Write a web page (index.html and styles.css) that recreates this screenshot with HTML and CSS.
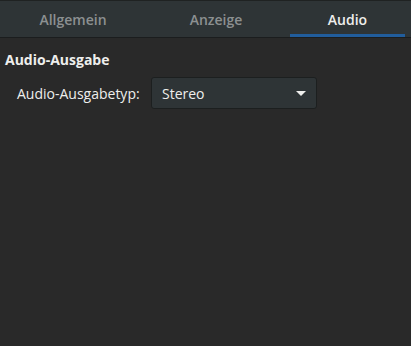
FILE: index.html
```html
<!DOCTYPE html>
<html lang="de">
<head>
    <meta charset="UTF-8">
    <meta name="viewport" content="width=device-width, initial-scale=1.0">
    <title>Einstellungen</title>
    <link rel="stylesheet" href="styles.css">
</head>
<body>
    <div class="tabs">
        <div class="tab tab-general">Allgemein</div>
        <div class="tab tab-display">Anzeige</div>
        <div class="tab tab-audio active">Audio</div>
    </div>

    <div class="page">
        <h2 class="section-title">Audio-Ausgabe</h2>
        <div class="row">
            <span class="label">Audio-Ausgabetyp:</span>
            <div class="combo">
                <span>Stereo</span>
                <svg class="arrow" width="10" height="5" viewBox="0 0 10 5">
                    <path d="M0 0 H10 L5 5 Z" fill="#eeeeec"/>
                </svg>
            </div>
        </div>
    </div>
</body>
</html>
```

FILE: styles.css
```css
body {
    margin: 0;
    font-family: "Open Sans", sans-serif;
    background-color: #292929;
    color: #eeeeec;
    height: 346px;
}

.tabs {
    display: flex;
    height: 36px;
    background-color: #2e3436;
    border-top: 1px solid #1f2222;
    border-bottom: 1px solid #1b1d1e;
}

.tab {
    display: flex;
    align-items: center;
    justify-content: center;
    font-size: 14px;
    font-weight: 600;
    color: #8c9091;
    box-sizing: border-box;
    border-bottom: 3px solid transparent;
    padding-top: 3px;
}

.tab-general {
    width: 146px;
}

.tab-display {
    width: 140px;
    margin-right: 4px;
}

.tab-audio {
    width: 115px;
}

.tab.active {
    color: #eeeeec;
    border-bottom-color: #215d9c;
}

.page {
    padding: 12px 5px;
}

.section-title {
    margin: 0;
    font-size: 14px;
    font-weight: 700;
}

.row {
    display: flex;
    align-items: center;
    margin-top: 8px;
    padding-left: 12px;
}

.label {
    font-size: 14px;
    width: 134px;
}

.combo {
    display: flex;
    align-items: center;
    justify-content: space-between;
    width: 166px;
    height: 32px;
    box-sizing: border-box;
    padding: 0 10px 0 10px;
    background-color: #2e3436;
    border: 1px solid #1c1f1f;
    border-radius: 3px;
    font-size: 14px;
}

.arrow {
    display: block;
}
```
